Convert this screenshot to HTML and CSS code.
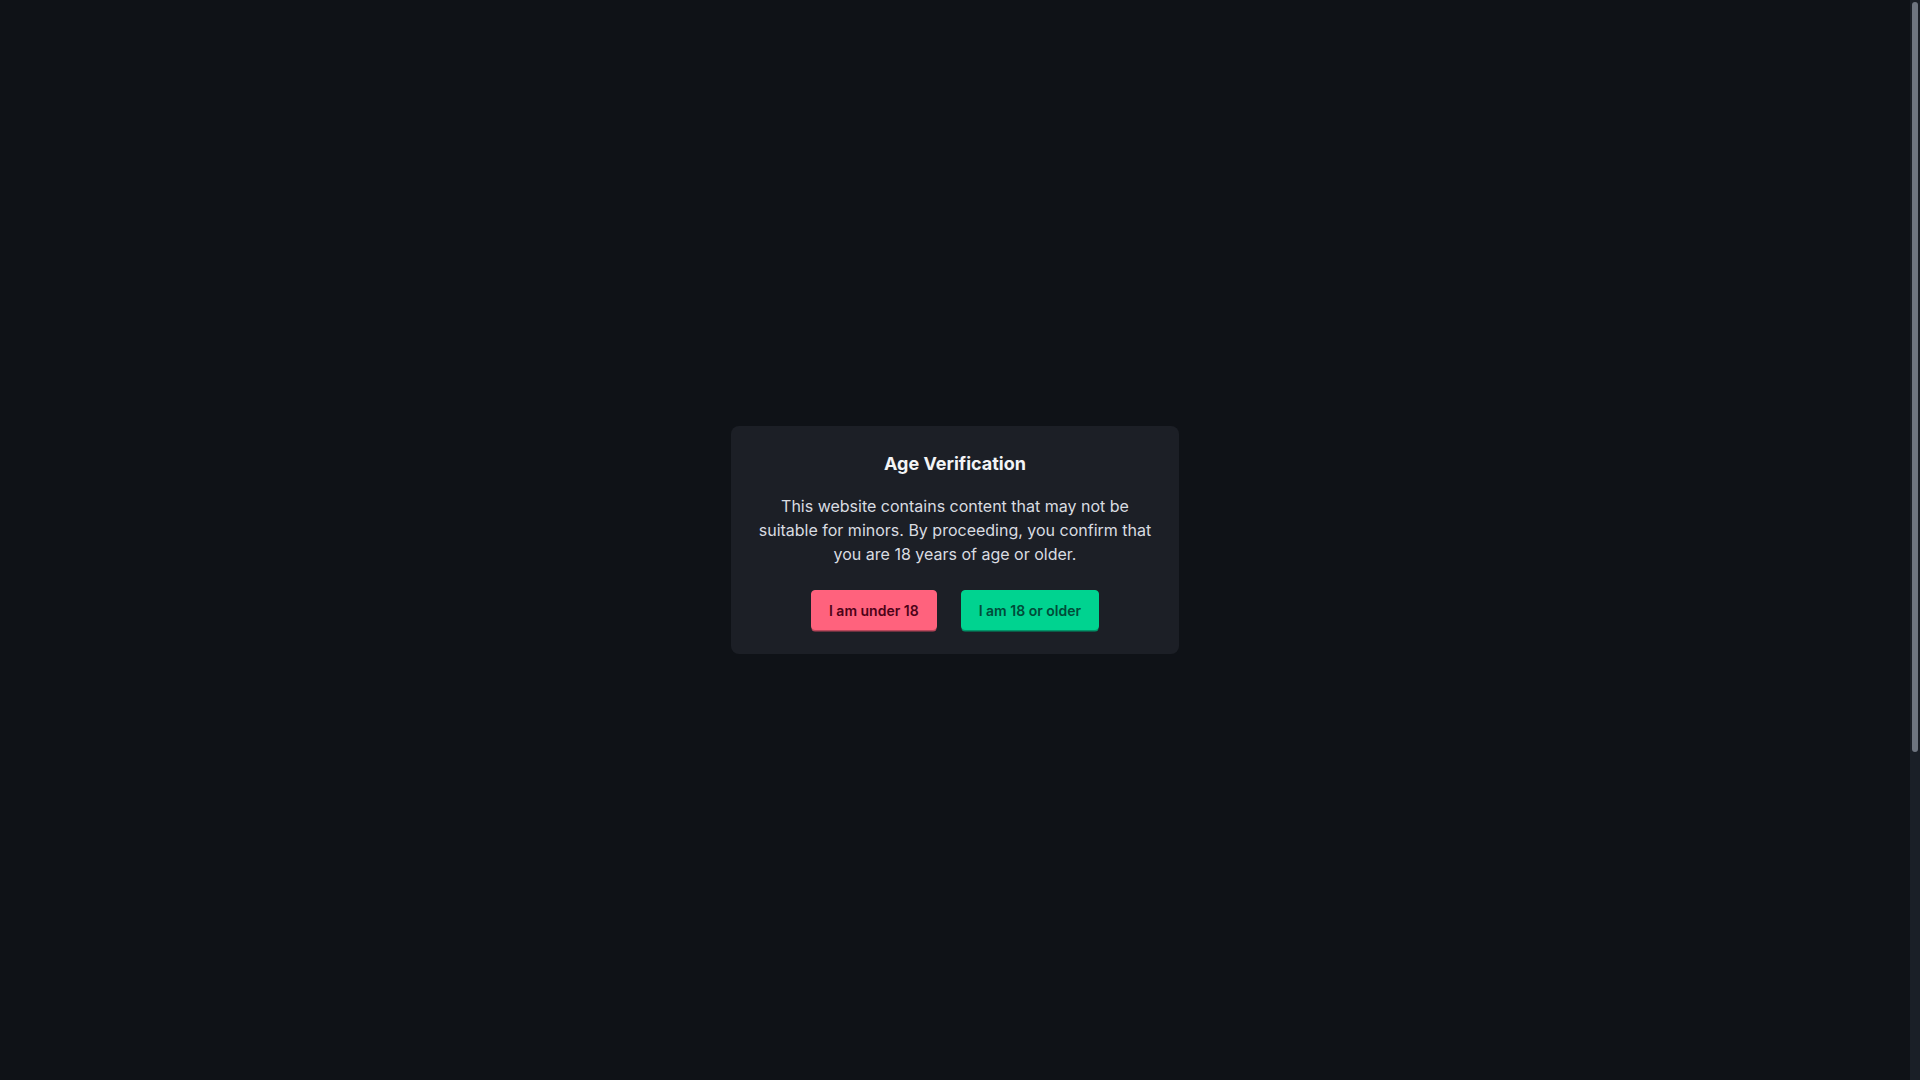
FILE: index.html
```html
<!DOCTYPE html>
<html lang="en">
<head>
<meta charset="utf-8">
<title>Age Verification</title>
<link rel="stylesheet" href="styles.css">
</head>
<body>
<div class="layout">
  <main class="overlay">
    <div class="modal">
      <h2 class="modal-title">Age Verification</h2>
      <p class="modal-text">This website contains content that may not be suitable for minors. By proceeding, you confirm that you are 18 years of age or older.</p>
      <div class="actions">
        <button class="btn btn-error">I am under 18</button>
        <button class="btn btn-success">I am 18 or older</button>
      </div>
    </div>
  </main>
  <div class="scrollbar"><div class="scrollbar-thumb"></div></div>
</div>
</body>
</html>
```

FILE: styles.css
```css
html, body {
  margin: 0;
  height: 100%;
  overflow: hidden;
  background: #0f1217;
}
body {
  font-family: Inter, "Noto Sans", sans-serif;
  color: #e5e7eb;
}
.layout {
  display: flex;
  height: 100vh;
}
.overlay {
  flex: 1;
  display: flex;
  align-items: center;
  justify-content: center;
}
.scrollbar {
  width: 10px;
  box-sizing: border-box;
  padding: 2px 2px;
  background: #1a1f27;
}
.scrollbar-thumb {
  height: 750px;
  background: #6e7580;
  border-radius: 3px;
}
.modal {
  width: 448px;
  box-sizing: border-box;
  padding: 24px;
  background: #1c1f26;
  border-radius: 8px;
  text-align: center;
}
.modal-title {
  margin: 0 0 16px;
  font-size: 18px;
  line-height: 28px;
  font-weight: 700;
  color: #f3f4f6;
}
.modal-text {
  margin: 0 0 24px;
  font-size: 16px;
  line-height: 24px;
  color: #d9dce1;
}
.actions {
  display: flex;
  justify-content: center;
  gap: 24px;
}
.btn {
  height: 40px;
  box-sizing: border-box;
  padding: 0 17px;
  border: 1px solid transparent;
  border-radius: 4px;
  font-family: Inter, "Noto Sans", sans-serif;
  font-size: 14px;
  font-weight: 600;
  cursor: pointer;
}
.btn-error {
  background: #ff627d;
  color: #4d0218;
  border-color: #ff627d;
  box-shadow: 0 2px 0 -0.5px #b8465a;
}
.btn-success {
  background: #00d390;
  color: #004c39;
  border-color: #00d390;
  box-shadow: 0 2px 0 -0.5px #019368;
}
```
